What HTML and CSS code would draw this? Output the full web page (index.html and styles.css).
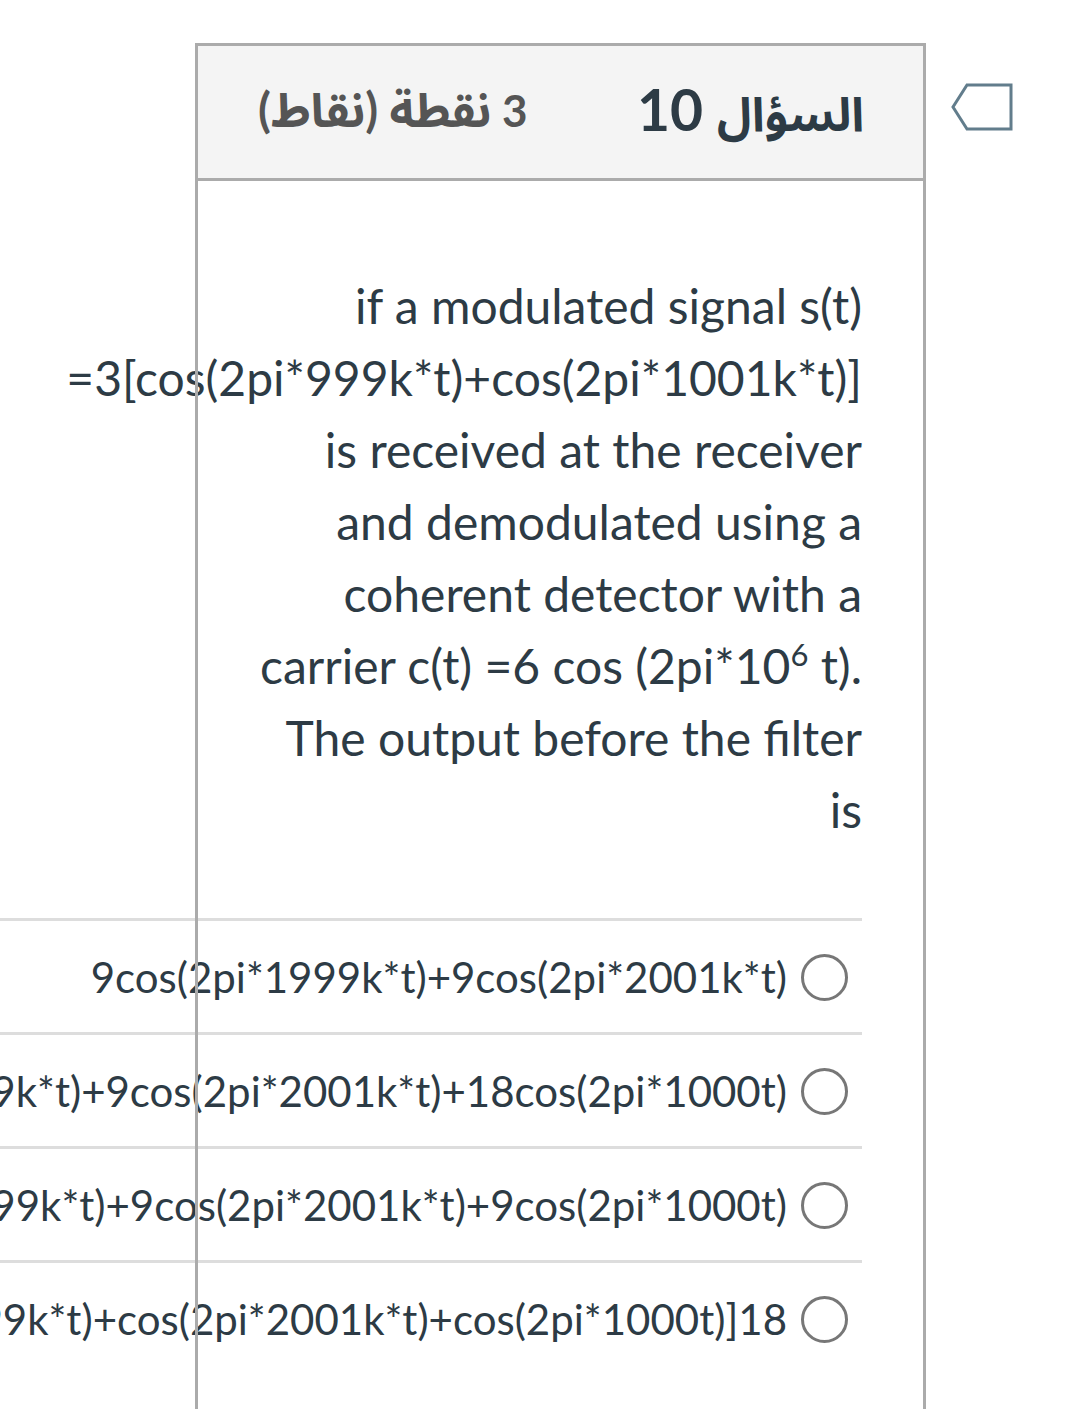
FILE: index.html
```html
<!DOCTYPE html>
<html lang="ar" dir="ltr">
<head>
<meta charset="utf-8">
<title>السؤال 10</title>
<link rel="stylesheet" href="styles.css">
</head>
<body>
<div class="page">
  <div class="question" dir="rtl">
    <div class="q-header">
      <span class="q-title"><span class="ar">السؤال</span> 10</span>
      <span class="q-points">3 <span class="ar">نقطة (نقاط)</span></span>
    </div>
    <div class="q-body">
      <p class="q-text">if a modulated signal s(t) <span class="nowrap">=3[cos(2pi*999k*t)+cos(2pi*1001k*t)]</span> is received at the receiver and demodulated using a coherent detector with a carrier c(t) =6 cos (2pi*10<sup>6</sup> t). The output before the filter is</p>
      <div class="answers">
        <label class="answer"><span class="radio"></span><span class="a-text">9cos(2pi*1999k*t)+9cos(2pi*2001k*t)</span></label>
        <label class="answer"><span class="radio"></span><span class="a-text">9cos(2pi*1999k*t)+9cos(2pi*2001k*t)+18cos(2pi*1000t)</span></label>
        <label class="answer"><span class="radio"></span><span class="a-text">9cos(2pi*1999k*t)+9cos(2pi*2001k*t)+9cos(2pi*1000t)</span></label>
        <label class="answer"><span class="radio"></span><span class="a-text">18[cos(2pi*1999k*t)+cos(2pi*2001k*t)+cos(2pi*1000t)]</span></label>
      </div>
    </div>
  </div>
  <div class="flag">
    <svg width="64" height="50" viewBox="0 0 64 50">
      <path d="M16 2 H60 V46 H16 L2 24 Z" fill="none" stroke="#627d8c" stroke-width="3" stroke-linejoin="miter"/>
    </svg>
  </div>
</div>
</body>
</html>
```

FILE: styles.css
```css
html, body {
  margin: 0;
  padding: 0;
  background: #ffffff;
}

body {
  font-family: Lato, "Noto Sans Arabic", "DejaVu Sans", sans-serif;
  color: #2d3b45;
}

.page {
  display: flex;
  align-items: flex-start;
  padding-top: 43px;
  padding-left: 195px;
}

.question {
  position: relative;
  width: 731px;
  flex: none;
}

.question::after {
  content: "";
  position: absolute;
  inset: 0;
  border: 3px solid #ababab;
  pointer-events: none;
}

.q-header {
  height: 135px;
  box-sizing: border-box;
  margin: 3px 3px 0 3px;
  background: #f4f4f4;
  border-bottom: 3px solid #ababab;
  display: flex;
  align-items: center;
  justify-content: space-between;
  padding: 0 59px 6px 60px;
}

.q-title {
  font-size: 57px;
  font-weight: 700;
  color: #2d3b45;
  line-height: 1;
}

.q-title .ar {
  font-size: 47px;
  font-weight: 700;
}

.q-points {
  font-size: 44px;
  font-weight: 700;
  color: #555555;
  line-height: 1;
}

.q-points .ar {
  font-size: 47px;
}

.q-body {
  padding: 89px 64px 120px 64px;
}

.q-text {
  margin: 0;
  font-size: 48px;
  line-height: 72px;
  text-align: right;
}

.q-text sup {
  font-size: 31px;
  line-height: 0;
  vertical-align: 18px;
}

.nowrap {
  white-space: nowrap;
}

.answers {
  width: max-content;
  margin-top: 72px;
}

.answer {
  display: flex;
  align-items: center;
  gap: 14px;
  height: 111px;
  border-top: 3px solid #dddddd;
  padding-right: 14px;
}

.radio {
  flex: none;
  width: 41px;
  height: 41px;
  border: 3px solid #777777;
  border-radius: 50%;
  box-sizing: content-box;
  margin-bottom: -2px;
}

.a-text {
  font-size: 42px;
  line-height: 60px;
  white-space: nowrap;
}

.flag {
  margin-left: 25px;
  margin-top: 40px;
  width: 64px;
  height: 50px;
}

.flag svg {
  display: block;
}
```
